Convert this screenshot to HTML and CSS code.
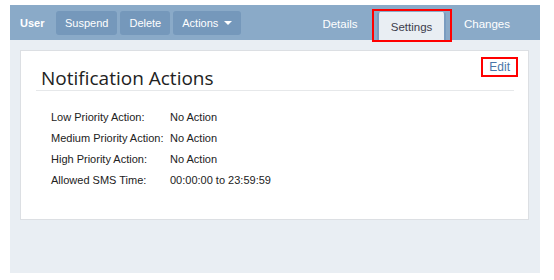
FILE: index.html
```html
<!DOCTYPE html>
<html>
<head>
<meta charset="utf-8">
<link rel="stylesheet" href="styles.css">
</head>
<body>
<div class="panel">
  <div class="topbar">
    <span class="user">User</span>
    <button class="btn">Suspend</button>
    <button class="btn">Delete</button>
    <button class="btn">Actions <span class="caret"></span></button>
    <div class="tabs">
      <span class="tab t-details">Details</span>
      <span class="tab active">Settings</span>
      <span class="tab t-changes">Changes</span>
    </div>
  </div>
  <div class="card">
    <div class="card-head">
      <h1 class="title">Notification Actions</h1>
      <a class="edit">Edit</a>
    </div>
    <div class="rows">
      <div class="row"><span class="label">Low Priority Action:</span><span class="value">No Action</span></div>
      <div class="row"><span class="label">Medium Priority Action:</span><span class="value">No Action</span></div>
      <div class="row"><span class="label">High Priority Action:</span><span class="value">No Action</span></div>
      <div class="row"><span class="label">Allowed SMS Time:</span><span class="value">00:00:00 to 23:59:59</span></div>
    </div>
  </div>
</div>
</body>
</html>
```
FILE: styles.css
```css
html, body {
  margin: 0;
  padding: 0;
  background: #ffffff;
  font-family: "Liberation Sans", Arial, sans-serif;
}
.panel {
  margin: 5px 0 0 10px;
  width: 530px;
  height: 268px;
  background: #e9eef3;
  display: flex;
  flex-direction: column;
}
.topbar {
  height: 35px;
  background: #8aaac8;
  display: flex;
  align-items: center;
  padding-left: 10px;
}
.user {
  color: #ffffff;
  font-weight: bold;
  font-size: 11px;
  width: 36px;
}
.btn {
  height: 24px;
  border: none;
  border-radius: 3px;
  background: #7598bb;
  color: #ffffff;
  font-family: "Liberation Sans", Arial, sans-serif;
  font-size: 11px;
  padding: 0 9px;
  margin-right: 3px;
  display: flex;
  align-items: center;
  justify-content: center;
}
.caret {
  display: inline-block;
  width: 0;
  height: 0;
  border-left: 4px solid transparent;
  border-right: 4px solid transparent;
  border-top: 4px solid #ffffff;
  margin-left: 6px;
  margin-top: 1px;
}
.tabs {
  margin-left: auto;
  margin-right: 18px;
  display: flex;
  align-self: flex-end;
  height: 28px;
}
.tab {
  color: #ffffff;
  font-size: 11.5px;
  display: flex;
  align-items: center;
  justify-content: center;
  padding-bottom: 4px;
  box-sizing: border-box;
}
.t-details {
  width: 66px;
  margin-right: 4px;
}
.t-changes {
  width: 70px;
  margin-left: 6px;
}
.tab.active {
  position: relative;
  width: 69px;
  background: #e9eef3;
  color: #3c3c4c;
  border-left: 2px solid #7a9cc0;
  border-right: 2px solid #7a9cc0;
  border-radius: 3px 3px 0 0;
  padding-bottom: 0;
  padding-top: 2px;
}
.tab.active::after {
  content: "";
  position: absolute;
  top: -3px;
  bottom: -2px;
  left: -7px;
  right: -8px;
  border: 2px solid #ff0000;
}
.card {
  margin: 10px 11px 0 10px;
  height: 170px;
  background: #ffffff;
  border: 1px solid #dcdfe3;
  box-sizing: border-box;
  padding: 0 14px 0 15px;
}
.card-head {
  display: flex;
  align-items: flex-start;
  justify-content: space-between;
  border-bottom: 1px solid #e6e8ea;
  height: 39px;
}
.title {
  margin: 15px 0 0 5px;
  font-weight: normal;
  font-size: 19px;
  color: #222222;
  font-family: "Open Sans", "Liberation Sans", sans-serif;
  line-height: 24px;
}
.edit {
  margin-top: 6px;
  margin-right: -4px;
  color: #4a76a8;
  font-size: 12px;
  border: 2px solid #ff0000;
  padding: 1px 6px 1px 6px;
  line-height: 14px;
}
.rows {
  padding: 15px 0 0 15px;
}
.row {
  height: 21px;
  display: flex;
  align-items: center;
  font-size: 11px;
  color: #222222;
}
.label {
  width: 119px;
}
```
